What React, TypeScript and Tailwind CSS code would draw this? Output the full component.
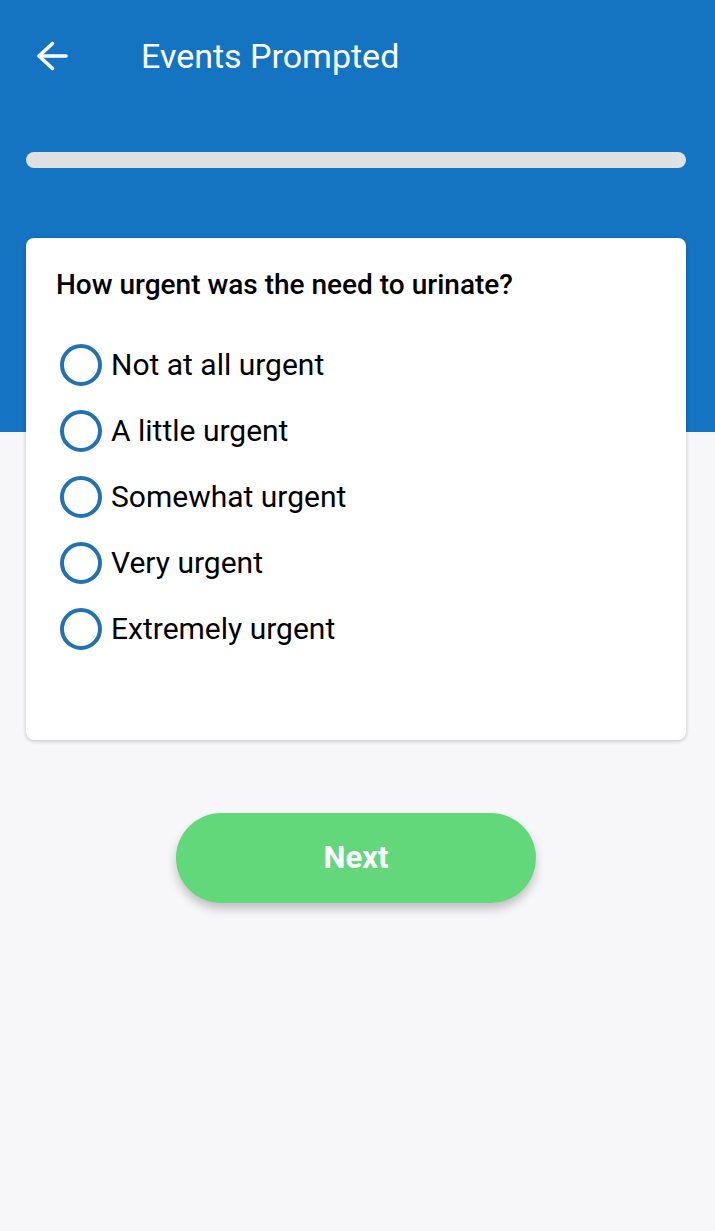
import { useState } from 'react';

const options = [
  'Not at all urgent',
  'A little urgent',
  'Somewhat urgent',
  'Very urgent',
  'Extremely urgent',
];

export default function App() {
  const [selected, setSelected] = useState<number | null>(null);

  return (
    <div
      className="min-h-[1231px] w-full bg-[linear-gradient(#1474c2_432px,#f7f7f9_432px)] font-['Roboto',sans-serif]"
    >
      <header className="flex h-[112px] items-center">
        <button className="ml-[36px] flex h-[32px] w-[32px] items-center justify-center text-white">
          <svg width="32" height="32" viewBox="0 0 32 32" fill="none" stroke="currentColor" strokeWidth="3.6" strokeLinecap="round" strokeLinejoin="round">
            <path d="M30 16H3.5" />
            <path d="M16.5 3.5 3 16l13.5 12.5" />
          </svg>
        </button>
        <h1 className="ml-[73px] text-[34px] leading-none text-white">Events Prompted</h1>
      </header>

      <div className="pl-[26px] pr-[29px]">
        <div className="mt-[40px] h-[16px] w-full rounded-full bg-[#dfe0e2]" />

        <div className="mt-[70px] min-h-[502px] rounded-[8px] bg-white px-[30px] pt-[31px] shadow-[0_1px_4px_rgba(0,0,0,0.22)]">
          <h2 className="text-[28px] font-medium leading-[32px] text-black">
            How urgent was the need to urinate?
          </h2>
          <ul className="mt-[43px] flex flex-col gap-[24px]">
            {options.map((label, i) => (
              <li
                key={label}
                className="flex h-[42px] cursor-pointer items-center"
                onClick={() => setSelected(i)}
              >
                <span className="ml-[4px] flex h-[42px] w-[42px] items-center justify-center rounded-full border-4 border-[#2371b3]">
                  {selected === i && <span className="h-[20px] w-[20px] rounded-full bg-[#2371b3]" />}
                </span>
                <span className="ml-[9px] text-[30px] leading-none text-black">{label}</span>
              </li>
            ))}
          </ul>
        </div>

        <div className="mt-[73px] flex justify-center">
          <button className="h-[90px] w-[360px] rounded-full bg-[#62d87a] text-[31px] font-bold text-white shadow-[0_6px_10px_rgba(0,0,0,0.22)]">
            Next
          </button>
        </div>
      </div>
    </div>
  );
}
